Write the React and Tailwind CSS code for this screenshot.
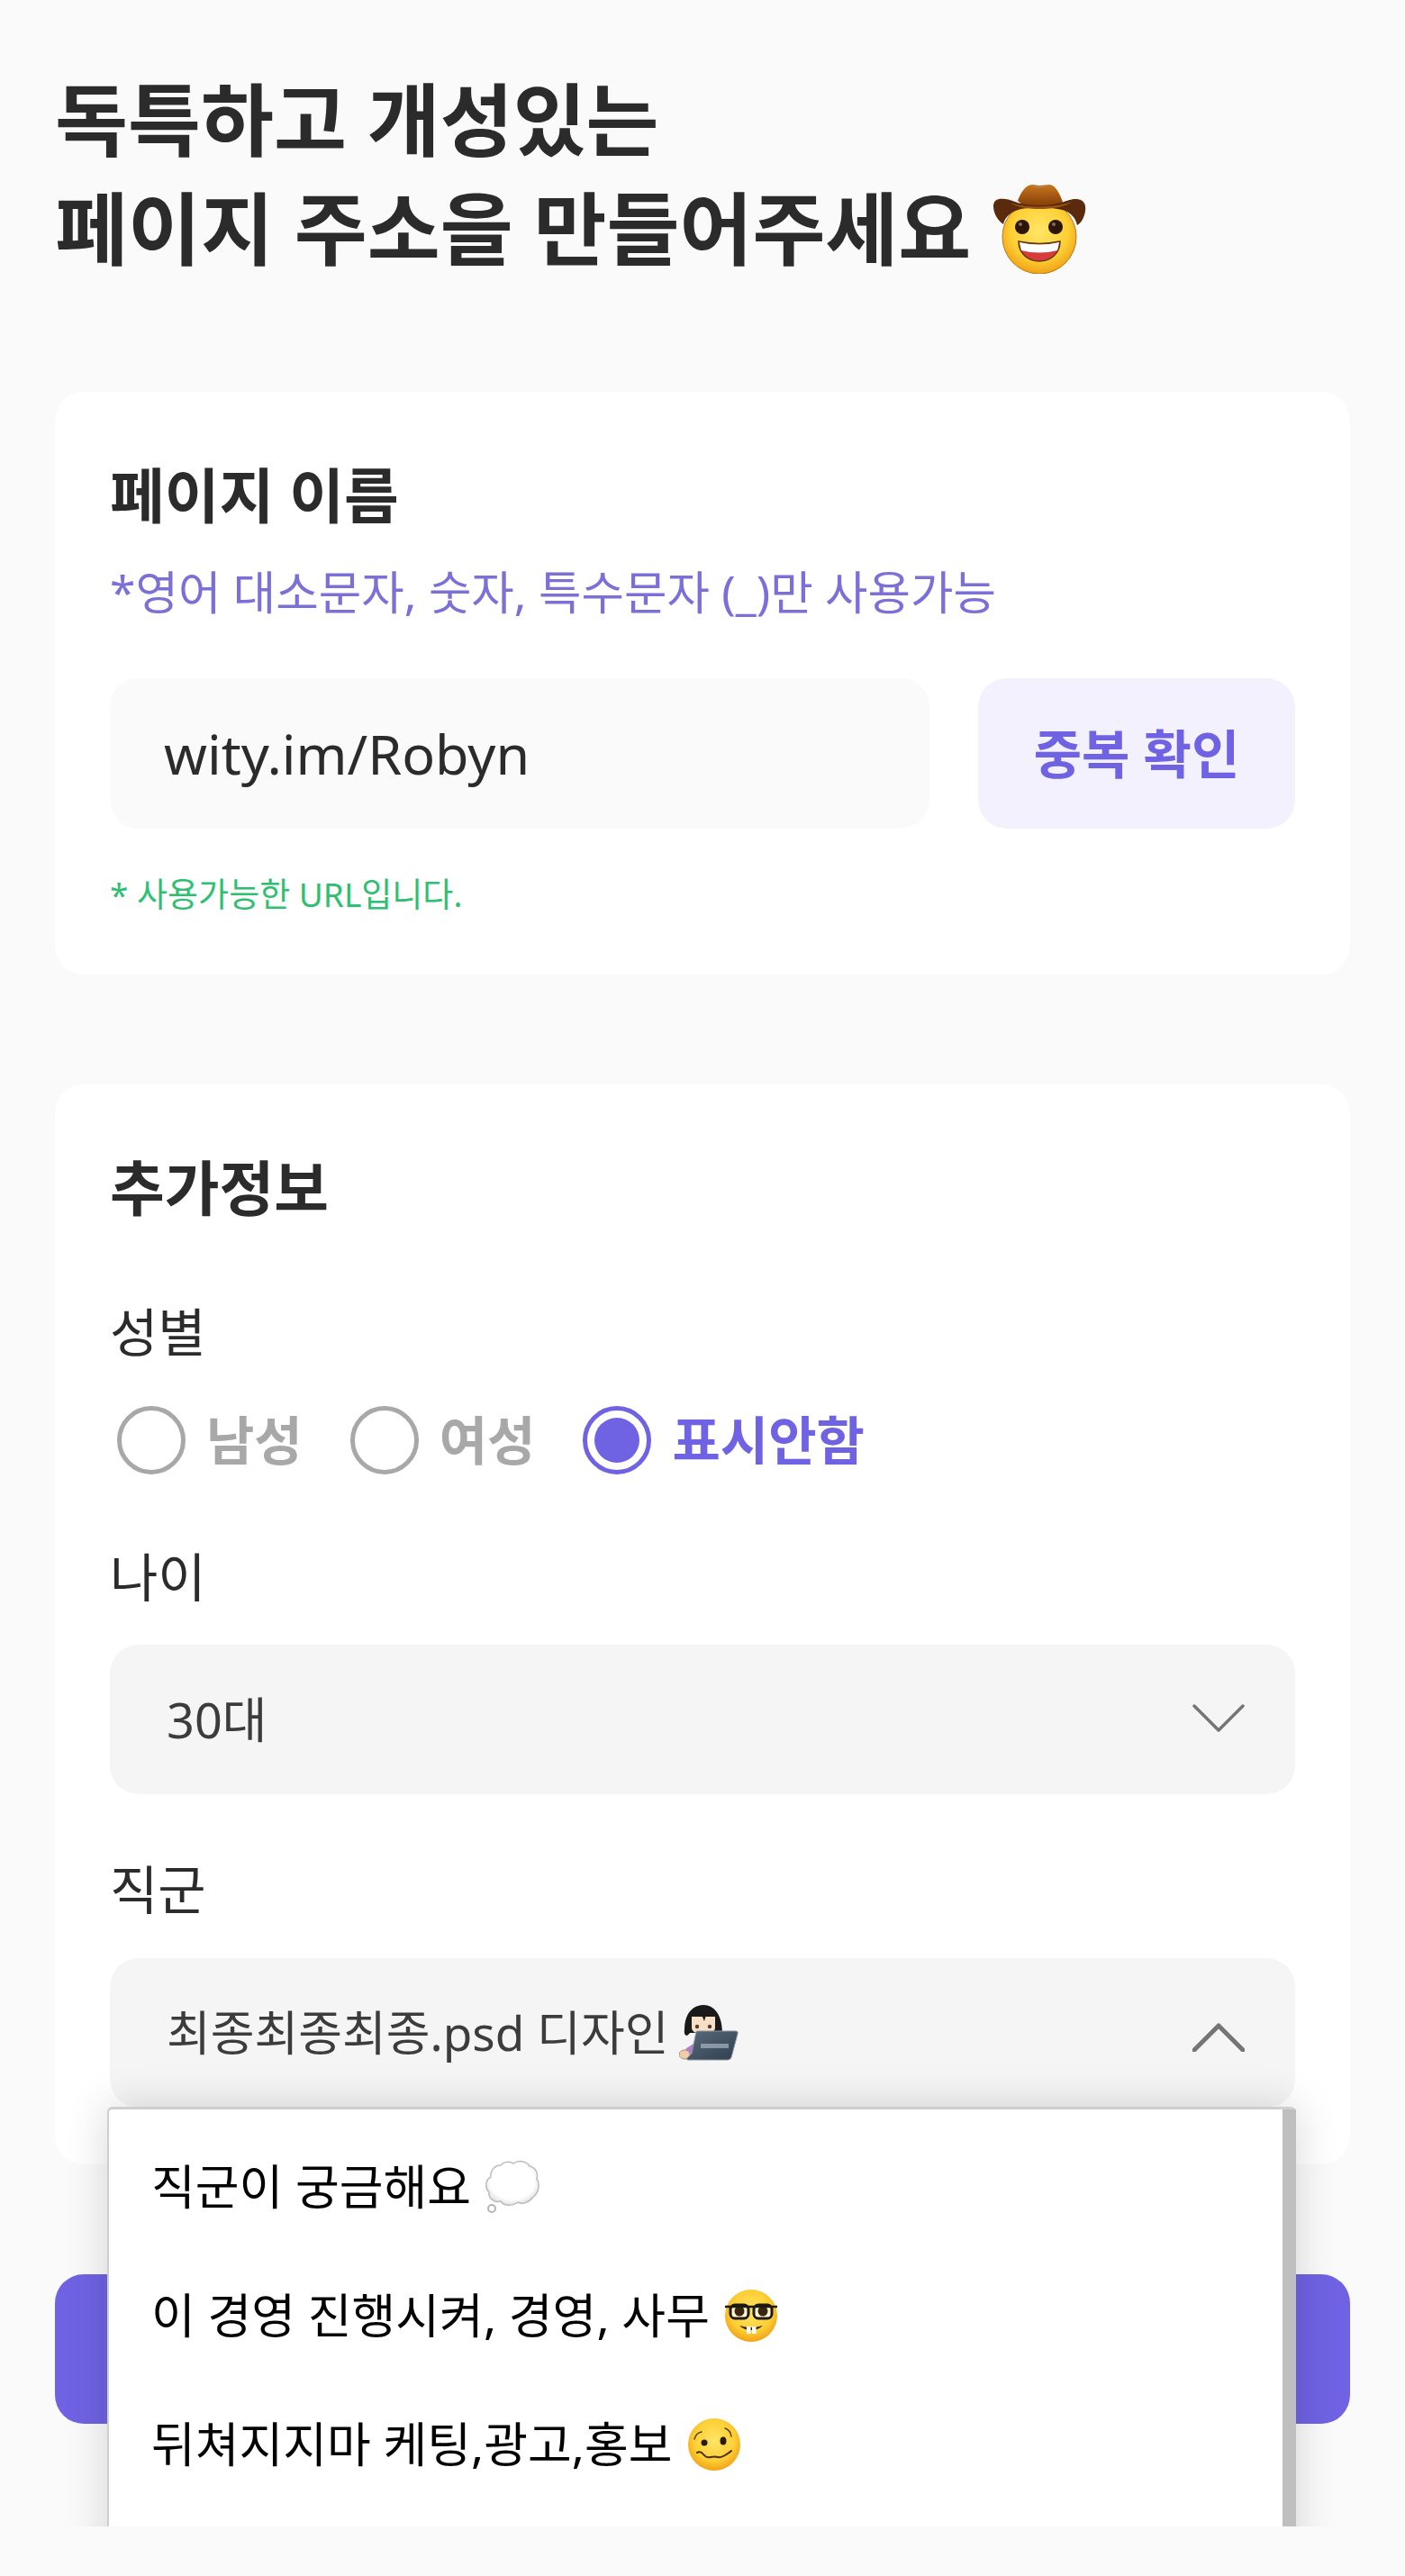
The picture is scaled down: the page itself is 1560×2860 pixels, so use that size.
import React from "react";

// Samsung-style emoji drawn by hand, no emoji font in the sandbox
function FaceDefs({ id }) {
  return (
    <defs>
      <radialGradient id={id} cx="50%" cy="42%" r="60%">
        <stop offset="0%" stopColor="#ffe566" />
        <stop offset="65%" stopColor="#fdcf35" />
        <stop offset="100%" stopColor="#f09d12" />
      </radialGradient>
    </defs>
  );
}

function CowboyEmoji() {
  return (
    <svg viewBox="0 0 104 100" className="w-[104px] h-[100px] shrink-0">
      <FaceDefs id="cowboyFace" />
      <defs>
        <linearGradient id="hatTop" x1="0" y1="0" x2="0" y2="1">
          <stop offset="0%" stopColor="#c9761c" />
          <stop offset="100%" stopColor="#7c3806" />
        </linearGradient>
      </defs>
      <circle cx="52" cy="59" r="41" fill="url(#cowboyFace)" stroke="#b87a1a" strokeWidth="1" />
      <path d="M28 19C31 10 37 1 44 1C48 1 50 2 52 2C55 2 59 1 63 1C70 1 75 12 78 20L66 27H38Z" fill="url(#hatTop)" />
      <path d="M44 2Q52 7 61 2Q52 4 44 2Z" fill="#a88a70" />
      <path d="M1 25C1 18 6 16 14 17C24 18 28 24 52 24C76 24 84 16 94 17C101 18 104 22 103 30C102 38 98 44 94 46C92 36 84 29 72 28C60 26 44 26 32 28C22 30 14 36 12 45C6 41 1 33 1 25Z" fill="#5a2a0c" />
      <path d="M20 21C32 27 72 27 88 20C78 30 30 31 20 21Z" fill="#9c5412" />
      <ellipse cx="33" cy="48" rx="8" ry="8" fill="#2c1608" />
      <ellipse cx="70" cy="48" rx="8" ry="8" fill="#2c1608" />
      <circle cx="31" cy="45" r="2" fill="#8a6a50" />
      <circle cx="68" cy="45" r="2" fill="#8a6a50" />
      <path d="M29 64Q52 69 75 64C75 78 64 86 52 86C40 86 29 78 29 64Z" fill="#d93c3c" stroke="#5a3a10" strokeWidth="1.5" />
      <path d="M30 65Q52 70 74 65L72 74Q52 79 32 74Z" fill="#fff" />
    </svg>
  );
}

function LaptopEmoji() {
  return (
    <svg viewBox="0 0 66 64" className="w-[66px] h-[64px] shrink-0">
      <defs>
        <linearGradient id="lid" x1="0" y1="0" x2="1" y2="1">
          <stop offset="0%" stopColor="#5a6b7c" />
          <stop offset="100%" stopColor="#2f3f50" />
        </linearGradient>
      </defs>
      <path d="M6 28C6 10 16 1 27 1C39 1 48 12 48 32H12C8 38 5 34 6 28Z" fill="#1a1a1a" />
      <path d="M14 14H40V26Q40 33 27 33Q14 33 14 26Z" fill="#f7dfc6" />
      <path d="M25 12L28 19L30 12Z" fill="#1a1a1a" />
      <circle cx="20" cy="25" r="2.2" fill="#4a4030" />
      <circle cx="34" cy="25" r="2.2" fill="#4a4030" />
      <path d="M7 50L16 44L22 56H8Z" fill="#b37bd1" />
      <ellipse cx="6" cy="56" rx="6" ry="5" fill="#f2cba8" stroke="#a89880" strokeWidth="1" />
      <path d="M19 31Q19 30 21 30H63Q66 30 65 33L58 59Q57 62 54 62H10Q8 62 9 60L14 55Z" fill="url(#lid)" stroke="#8a95a0" strokeWidth="1" />
      <rect x="24" y="44" width="31" height="5" fill="#a8b4c0" opacity="0.7" />
    </svg>
  );
}

function ThoughtEmoji() {
  return (
    <svg viewBox="0 0 62 60" className="w-[62px] h-[60px] shrink-0">
      <defs>
        <radialGradient id="cloud" cx="50%" cy="45%" r="60%">
          <stop offset="70%" stopColor="#ffffff" />
          <stop offset="100%" stopColor="#d8d8d8" />
        </radialGradient>
      </defs>
      <path d="M17 6C21 1 28 2 31 4C36 0 46 1 49 7C55 8 59 14 57 21C61 27 59 37 53 41C49 47 41 50 36 47C31 51 21 52 17 46C10 48 3 43 4 36C-1 31 0 22 6 19C5 12 10 6 17 6Z" fill="url(#cloud)" stroke="#bcbcbc" strokeWidth="1.5" />
      <circle cx="7" cy="54" r="4" fill="#fff" stroke="#b5b5b5" strokeWidth="2" />
    </svg>
  );
}

function NerdEmoji() {
  return (
    <svg viewBox="0 0 60 60" className="w-[60px] h-[60px] shrink-0">
      <FaceDefs id="nerdFace" />
      <circle cx="30" cy="30" r="29" fill="url(#nerdFace)" />
      <rect x="7" y="18" width="20" height="15" rx="5" fill="#fff5d0" />
      <rect x="33" y="18" width="20" height="15" rx="5" fill="#fff5d0" />
      <circle cx="17" cy="25" r="5.5" fill="#3a2610" />
      <circle cx="43" cy="25" r="5.5" fill="#3a2610" />
      <path d="M1 20H59" stroke="#1e1a12" strokeWidth="2.5" />
      <rect x="7" y="18" width="20" height="15" rx="5" fill="none" stroke="#1e1a12" strokeWidth="3" />
      <rect x="33" y="18" width="20" height="15" rx="5" fill="none" stroke="#1e1a12" strokeWidth="3" />
      <path d="M17 41Q30 45 43 41Q38 46 30 46Q22 46 17 41Z" fill="#3a2610" />
      <rect x="25" y="42" width="4.5" height="8" fill="#fff" />
      <rect x="31" y="42" width="4.5" height="8" fill="#fff" />
    </svg>
  );
}

function WoozyEmoji() {
  return (
    <svg viewBox="0 0 60 60" className="w-[60px] h-[60px] shrink-0">
      <FaceDefs id="woozyFace" />
      <circle cx="30" cy="30" r="29" fill="url(#woozyFace)" />
      <path d="M8 24Q10 17 16 16" fill="none" stroke="#5a3a10" strokeWidth="1.5" strokeLinecap="round" />
      <path d="M42 12Q48 14 49 21" fill="none" stroke="#5a3a10" strokeWidth="1.5" strokeLinecap="round" />
      <circle cx="19" cy="28" r="3.5" fill="#2c1a08" />
      <ellipse cx="40" cy="26" rx="3.5" ry="4.5" fill="#2c1a08" />
      <path d="M11 39Q15 37 18 41T26 44T34 44T42 42T49 37" fill="none" stroke="#4a2e0c" strokeWidth="2" strokeLinecap="round" />
    </svg>
  );
}

function Chevron({ up }) {
  return (
    <svg viewBox="0 0 58 32" className={up ? "w-[58px] h-[32px] mt-[10px]" : "w-[58px] h-[32px] -mt-[3px]"}>
      <path d={up ? "M2 30L29 3L56 30" : "M2 2L29 29L56 2"} fill="none" stroke="#757575" strokeWidth={up ? 5 : 3.5} strokeLinecap="round" strokeLinejoin="round" />
    </svg>
  );
}

function Radio({ label, checked }) {
  return (
    <div className="flex items-center">
      <div className={`w-[76px] h-[76px] rounded-full border-[5px] flex items-center justify-center bg-white ${checked ? "border-[#6f63e4]" : "border-[#a8a8a8]"}`}>
        {checked && <div className="w-[50px] h-[50px] rounded-full bg-[#6f63e4]" />}
      </div>
      <span className={`ml-[23px] text-[58px] font-bold leading-[76px] ${checked ? "text-[#6f63e4]" : "text-[#a8a8a8]"}`}>{label}</span>
    </div>
  );
}

function Select({ up, children, className }) {
  return (
    <div className={`h-[166px] rounded-[32px] bg-[#f5f5f5] pl-[63px] pr-[56px] flex items-center justify-between text-[#3c3c3c] ${className}`}>
      {children}
      <Chevron up={up} />
    </div>
  );
}

const OPTIONS = [
  { label: "직군이 궁금해요", icon: <ThoughtEmoji /> },
  { label: "이 경영 진행시켜, 경영, 사무", icon: <NerdEmoji /> },
  { label: "뒤쳐지지마 케팅,광고,홍보", icon: <WoozyEmoji /> },
];

export default function App() {
  return (
    <div className="min-h-screen bg-[#fafafa] text-[#2b2b2b] font-['Noto_Sans','Noto_Sans_CJK_KR',sans-serif]">
      <div className="h-[2805px] overflow-hidden px-[61px] pt-[72px]">
        <h1 className="text-[88px] font-bold leading-[121px] mb-[121px]">
          <div>독특하고 개성있는</div>
          <div className="flex items-center gap-[24px]">
            페이지 주소을 만들어주세요 <CowboyEmoji />
          </div>
        </h1>

        {/* page name card */}
        <section className="bg-white rounded-[32px] px-[61px] pt-[74px] pb-[61px]">
          <h2 className="text-[66px] font-bold leading-[80px]">페이지 이름</h2>
          <p className="mt-[32px] text-[51.6px] leading-[72px] text-[#7b6fd8]">*영어 대소문자, 숫자, 특수문자 (_)만 사용가능</p>
          <div className="mt-[60px] flex gap-[54px]">
            <div className="flex-1 h-[167px] rounded-[32px] bg-[#fafafa] pl-[60px] flex items-center text-[61px]">wity.im/Robyn</div>
            <button className="w-[352px] h-[167px] rounded-[32px] bg-[#f3f1fd] text-[#6f63e4] text-[58px] font-bold">중복 확인</button>
          </div>
          <p className="mt-[45px] text-[37px] leading-[56px] text-[#2fbf71]">* 사용가능한 URL입니다.</p>
        </section>

        {/* extra info card */}
        <section className="mt-[122px] bg-white rounded-[32px] px-[61px] pt-[74px] pb-[63px]">
          <h2 className="text-[66px] font-bold leading-[80px]">추가정보</h2>
          <p className="mt-[85px] text-[58px] leading-[72px]">성별</p>
          <div className="mt-[46px] ml-[8px] flex gap-[53px]">
            <Radio label="남성" />
            <Radio label="여성" />
            <Radio label="표시안함" checked />
          </div>
          <p className="mt-[78px] text-[58px] leading-[72px]">나이</p>
          <Select className="mt-[39px] text-[54px]">30대</Select>
          <p className="mt-[70px] text-[58px] leading-[72px]">직군</p>
          <div className="relative mt-[40px]">
            <Select up className="text-[53px]">
              <span className="flex items-center gap-[12px]">최종최종최종.psd 디자인 <LaptopEmoji /></span>
            </Select>
            <div className="absolute left-[-3px] right-[-1px] top-[165px] h-[600px] z-10 flex bg-white border-t-[3px] border-l-[2px] border-[#cfcfcf] rounded-t-[6px] shadow-[0_0_48px_rgba(0,0,0,0.16)]">
              <ul className="flex-1 pt-[14px] text-[53px] text-black">
                {OPTIONS.map((o) => (
                  <li key={o.label} className="h-[143px] pl-[47px] flex items-center gap-[16px]">
                    {o.label} {o.icon}
                  </li>
                ))}
              </ul>
              <div className="w-[15px] bg-[#bfbfbf]" />
            </div>
          </div>
        </section>

        <button className="mt-[122px] w-full h-[166px] rounded-[32px] bg-[#6f63e4]" />
      </div>
    </div>
  );
}
